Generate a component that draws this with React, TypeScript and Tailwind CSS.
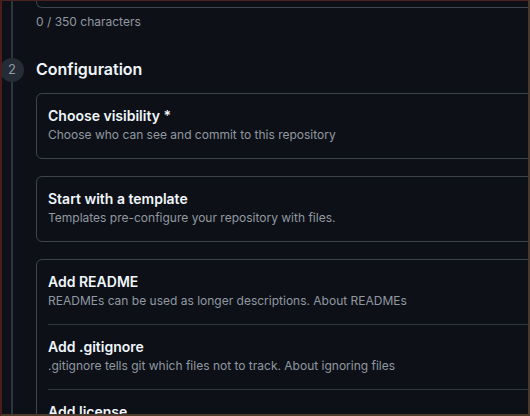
import React from 'react';

const rows = [
  { title: 'Add README', desc: 'READMEs can be used as longer descriptions. About READMEs' },
  { title: 'Add .gitignore', desc: '.gitignore tells git which files not to track. About ignoring files' },
  { title: 'Add license', desc: 'Licenses explain how others can use your code. About licenses' },
];

function Section({ title, desc }: { title: string; desc: string }) {
  return (
    <div className="rounded-md border border-[#3d444d] px-[11px] pt-3 pb-[14px]">
      <div className="text-[14px] leading-5 font-semibold text-[#f0f6fc]">{title}</div>
      <div className="text-[12px] leading-[18px] text-[#9198a1]">{desc}</div>
    </div>
  );
}

export default function App() {
  return (
    <div
      className="h-[416px] w-[530px] overflow-hidden bg-[#0d1117] border-l-2 border-t border-r-2 border-b-2 border-l-[#4d1c1c] border-t-[#4a2320] border-r-[#4a3a2b] border-b-[#4d3a2a]"
      style={{ fontFamily: 'Inter, "Noto Sans", sans-serif' }}
    >
      <div className="flex h-full">
        {/* timeline */}
        <div className="flex w-[34px] shrink-0 flex-col items-center pr-[14px]">
          <div className="h-[57px] w-[2px] bg-[#30363d]" />
          <div className="flex h-6 w-6 shrink-0 items-center justify-center rounded-full bg-[#262c36] text-[13px] text-[#9198a1]">
            2
          </div>
          <div className="w-[2px] flex-1 bg-[#30363d]" />
        </div>

        {/* content */}
        <div className="w-[620px] shrink-0">
          <div className="h-[7px] rounded-b-md border border-t-0 border-[#3d444d]" />
          <div className="mt-[5px] text-[12px] leading-[18px] text-[#9198a1]">0 / 350 characters</div>

          <h2 className="mt-[26px] text-[16px] leading-6 font-semibold text-[#f0f6fc]">Configuration</h2>

          <div className="mt-[12px] flex flex-col gap-[17px]">
            <Section title="Choose visibility *" desc="Choose who can see and commit to this repository" />
            <Section title="Start with a template" desc="Templates pre-configure your repository with files." />

            <div className="rounded-md border border-[#3d444d]">
              {rows.map((row, i) => (
                <div key={row.title} className="px-[11px]">
                  <div className={`pt-3 pb-[14px] ${i > 0 ? 'border-t border-[#30363d]' : ''}`}>
                    <div className="text-[14px] leading-5 font-semibold text-[#f0f6fc]">{row.title}</div>
                    <div className="text-[12px] leading-[18px] text-[#9198a1]">{row.desc}</div>
                  </div>
                </div>
              ))}
            </div>
          </div>
        </div>
      </div>
    </div>
  );
}
